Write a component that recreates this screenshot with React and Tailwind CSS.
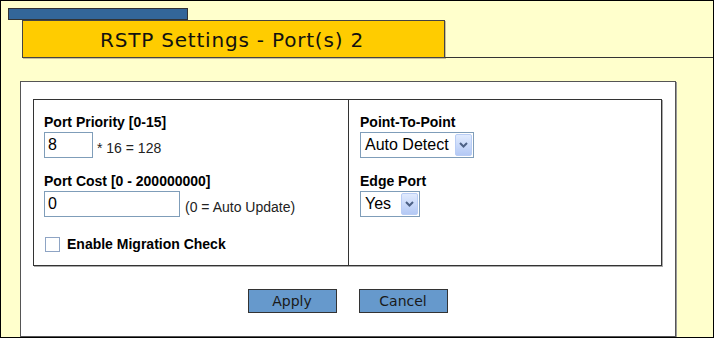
import React from "react";

function FakeSelect({ value, width }) {
  return (
    <div
      className="flex items-stretch h-[26px] border border-[#7f9db9] bg-white p-px"
      style={{ width }}
    >
      <div className="flex-1 flex items-center pl-[3px] text-[16px] leading-none text-black font-['Liberation_Sans',Arial,sans-serif]">
        {value}
      </div>
      <div className="w-[17px] flex items-center justify-center border border-[#b9cdf5] bg-gradient-to-b from-[#e1ebfe] to-[#b4c9f5] rounded-[2px]">
        <svg width="9" height="6" viewBox="0 0 9 6">
          <path d="M1 1 L4.5 4.5 L8 1" stroke="#4d6185" strokeWidth="2" fill="none" />
        </svg>
      </div>
    </div>
  );
}

export default function App() {
  return (
    <div className="w-[714px] h-[338px] border border-black bg-[#ffffcc] box-border overflow-hidden font-['Liberation_Sans',Arial,sans-serif]">
      {/* blue bar */}
      <div className="mt-[7px] ml-[7px] w-[180px] h-[12px] border border-[#333] bg-[#336699]" />
      {/* tab row */}
      <div className="flex items-end">
        <div className="ml-[21px] w-[423px] h-[38px] border border-[#444] bg-[#ffcc00] shadow-[1px_1px_0_#c8c09a]">
          <div className="pl-[77px] pt-[7px] text-[20px] leading-[24px] tracking-[0.8px] text-[#111] font-['DejaVu_Sans',Verdana,sans-serif]">
            RSTP Settings - Port(s) 2
          </div>
        </div>
        <div className="flex-1 h-px bg-[#333]" />
      </div>
      {/* panel */}
      <div className="mt-[23px] ml-[19px] w-[656px] h-[256px] border border-[#555] bg-white shadow-[1px_1px_0_#999]">
        <div className="mt-[17px] ml-[12px] w-[629px] h-[167px] border border-[#333] shadow-[1px_1px_0_#aaa] flex">
          <div className="w-[315px] border-r border-[#333] pl-[10px] pt-[14px] flex flex-col">
            <div className="text-[14px] leading-[16px] font-bold text-black">Port Priority [0-15]</div>
            <div className="mt-[2px] flex items-end">
              <div className="w-[49px] h-[26px] border border-[#7f9db9] flex items-center pl-[3px] text-[16px] leading-none text-black">
                8
              </div>
              <span className="ml-[4px] mb-[2px] text-[14px] leading-[16px] text-[#222]">* 16 = 128</span>
            </div>
            <div className="mt-[15px] text-[14px] leading-[16px] font-bold text-black">Port Cost [0 - 200000000]</div>
            <div className="mt-[2px] flex items-end">
              <div className="w-[136px] h-[26px] border border-[#7f9db9] flex items-center pl-[3px] text-[16px] leading-none text-black">
                0
              </div>
              <span className="ml-[5px] mb-[2px] text-[14px] leading-[16px] text-[#222]">(0 = Auto Update)</span>
            </div>
            <div className="mt-[19px] flex items-center">
              <div className="ml-px w-[15px] h-[15px] border border-[#8ea4c4] bg-white" />
              <span className="ml-[7px] text-[14px] leading-[16px] font-bold text-black">Enable Migration Check</span>
            </div>
          </div>
          <div className="flex-1 pl-[11px] pt-[14px] flex flex-col">
            <div className="text-[14px] leading-[16px] font-bold text-black">Point-To-Point</div>
            <div className="mt-[2px]">
              <FakeSelect value="Auto Detect" width={114} />
            </div>
            <div className="mt-[15px] text-[14px] leading-[16px] font-bold text-black">Edge Port</div>
            <div className="mt-[2px]">
              <FakeSelect value="Yes" width={60} />
            </div>
          </div>
        </div>
        <div className="mt-[23px] flex justify-center gap-[22px] pr-px">
          <button className="w-[89px] h-[24px] border border-[#333] bg-[#6699cc] text-[14px] leading-none text-[#1a1a1a] font-['DejaVu_Sans',Verdana,sans-serif]">
            Apply
          </button>
          <button className="w-[89px] h-[24px] border border-[#333] bg-[#6699cc] text-[14px] leading-none text-[#1a1a1a] font-['DejaVu_Sans',Verdana,sans-serif]">
            Cancel
          </button>
        </div>
      </div>
    </div>
  );
}
